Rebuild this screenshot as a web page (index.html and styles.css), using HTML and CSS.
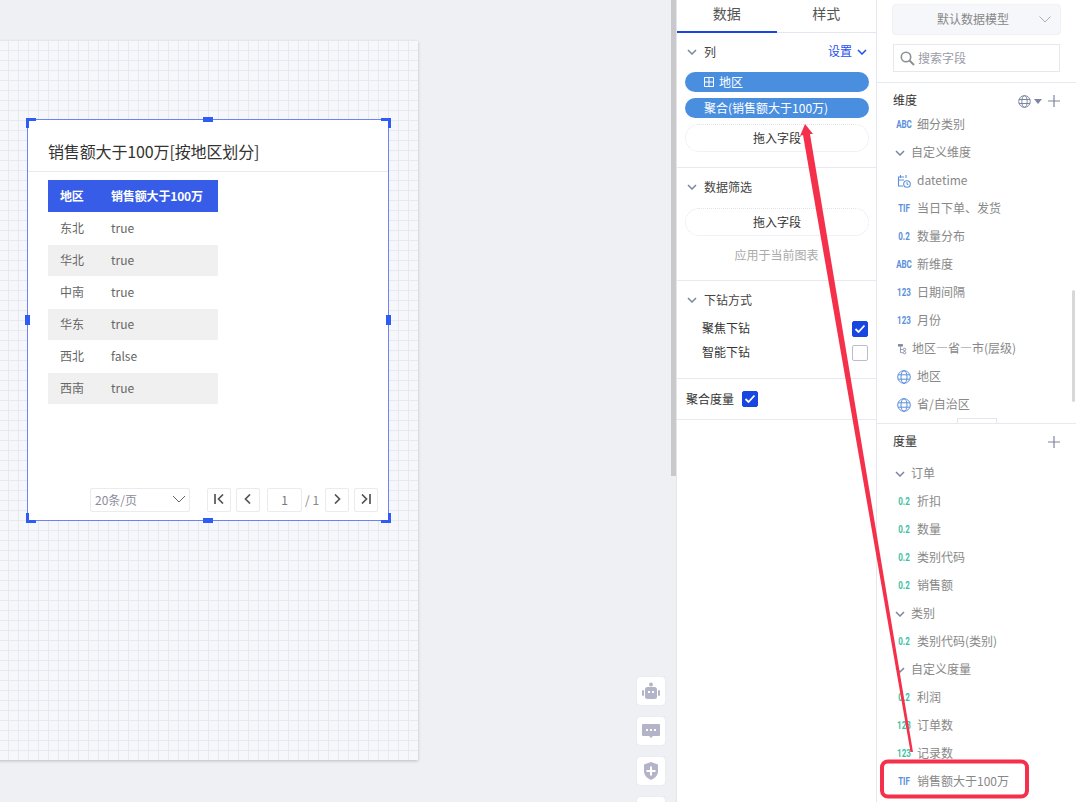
FILE: index.html
```html
<!DOCTYPE html>
<html lang="zh-CN">
<head>
<meta charset="utf-8">
<title>数据面板</title>
<link rel="stylesheet" href="styles.css">
</head>
<body>
<div class="app">
  <main class="canvas">
    <div class="paper">
      <section class="card">
        <span class="h h-tl"></span><span class="h h-tr"></span><span class="h h-bl"></span><span class="h h-br"></span>
        <span class="m m-t"></span><span class="m m-b"></span><span class="m m-l"></span><span class="m m-r"></span>
        <h1 class="card-title">销售额大于100万[按地区划分]</h1>
        <table class="tbl">
          <thead><tr><th class="c1">地区</th><th>销售额大于100万</th></tr></thead>
          <tbody>
            <tr><td>东北</td><td>true</td></tr>
            <tr class="alt"><td>华北</td><td>true</td></tr>
            <tr><td>中南</td><td>true</td></tr>
            <tr class="alt"><td>华东</td><td>true</td></tr>
            <tr><td>西北</td><td>false</td></tr>
            <tr class="alt"><td>西南</td><td>true</td></tr>
          </tbody>
        </table>
        <div class="pager">
          <div class="pg-select"><span>20条/页</span><svg width="14" height="8" viewBox="0 0 14 8"><path d="M1 1l6 6 6-6" fill="none" stroke="#666" stroke-width="1"/></svg></div>
          <button class="pg-btn first"><svg width="12" height="10" viewBox="0 0 12 10"><path d="M2 0v10M10 .5L5.500 5l4.500 4.500" fill="none" stroke="#555" stroke-width="1.700"/></svg></button>
          <button class="pg-btn"><svg width="8" height="10" viewBox="0 0 8 10"><path d="M6 .5L1.500 5 6 9.500" fill="none" stroke="#555" stroke-width="1.700"/></svg></button>
          <div class="pg-input">1</div>
          <span class="pg-total">/ 1</span>
          <button class="pg-btn"><svg width="8" height="10" viewBox="0 0 8 10"><path d="M2 .5L6.500 5 2 9.500" fill="none" stroke="#555" stroke-width="1.700"/></svg></button>
          <button class="pg-btn"><svg width="12" height="10" viewBox="0 0 12 10"><path d="M10 0v10M2 .5L6.500 5 2 9.500" fill="none" stroke="#555" stroke-width="1.700"/></svg></button>
        </div>
      </section>
    </div>
    <div class="tools">
      <div class="tool"><svg width="20" height="18" viewBox="0 0 20 18"><circle cx="10" cy="2.500" r="2" fill="#b4b4c8"/><rect x="4" y="5" width="12" height="12" rx="2.500" fill="#b4b4c8"/><rect x="1" y="8" width="2" height="6" rx="1" fill="#b4b4c8"/><rect x="17" y="8" width="2" height="6" rx="1" fill="#b4b4c8"/><rect x="7" y="9" width="2" height="2" fill="#fff"/><rect x="11" y="9" width="2" height="2" fill="#fff"/></svg></div>
      <div class="tool"><svg width="18" height="15" viewBox="0 0 18 15"><path d="M1 0h16a1 1 0 0 1 1 1v10a1 1 0 0 1-1 1h-6l-2 2-2-2H1a1 1 0 0 1-1-1V1a1 1 0 0 1 1-1z" fill="#b4b4c8"/><rect x="4" y="5" width="2" height="2" fill="#fff"/><rect x="8" y="5" width="2" height="2" fill="#fff"/><rect x="12" y="5" width="2" height="2" fill="#fff"/></svg></div>
      <div class="tool"><svg width="16" height="18" viewBox="0 0 16 18"><path d="M8 0l7 2.500v7c0 4-3.500 7-7 8.500-3.500-1.500-7-4.500-7-8.500v-7z" fill="#b4b4c8"/><path d="M8 4.500v9M3.500 9h9" stroke="#fff" stroke-width="2"/></svg></div>
      <div class="tool"></div>
    </div>
    <div class="canvas-scroll"></div>
  </main>

  <aside class="data-panel">
    <nav class="tabs"><div class="tab active">数据</div><div class="tab">样式</div></nav>
    <section class="sec sec-col">
      <div class="sec-head"><svg class="chev" width="10" height="6" viewBox="0 0 10 6"><path d="M1 1l4 4 4-4" fill="none" stroke="#7d86a0" stroke-width="1.500"/></svg><span class="sec-name">列</span><span class="setting">设置<svg width="10" height="6" viewBox="0 0 10 6"><path d="M1 1l4 4 4-4" fill="none" stroke="#1d4ff0" stroke-width="1.500"/></svg></span></div>
      <div class="pill"><svg width="10" height="10" viewBox="0 0 10 10"><path d="M.5.500h9v9h-9zM5 .5v9M.5 5h9" fill="none" stroke="#fff"/></svg>地区</div>
      <div class="pill">聚合(销售额大于100万)</div>
      <div class="drop">拖入字段</div>
    </section>
    <section class="sec sec-filter">
      <div class="sec-head"><svg class="chev" width="10" height="6" viewBox="0 0 10 6"><path d="M1 1l4 4 4-4" fill="none" stroke="#7d86a0" stroke-width="1.500"/></svg><span class="sec-name">数据筛选</span></div>
      <div class="drop">拖入字段</div>
      <div class="apply">应用于当前图表</div>
    </section>
    <section class="sec sec-drill">
      <div class="sec-head"><svg class="chev" width="10" height="6" viewBox="0 0 10 6"><path d="M1 1l4 4 4-4" fill="none" stroke="#7d86a0" stroke-width="1.500"/></svg><span class="sec-name">下钻方式</span></div>
      <div class="opt"><span class="opt-name">聚焦下钻</span><span class="check on"><svg width="12" height="10" viewBox="0 0 12 10"><path d="M1.500 5l3 3 6-6.500" fill="none" stroke="#fff" stroke-width="1.800"/></svg></span></div>
      <div class="opt"><span class="opt-name">智能下钻</span><span class="check"></span></div>
    </section>
    <section class="sec sec-agg">
      <span class="opt-name">聚合度量</span><span class="check on"><svg width="12" height="10" viewBox="0 0 12 10"><path d="M1.500 5l3 3 6-6.500" fill="none" stroke="#fff" stroke-width="1.800"/></svg></span>
    </section>
  </aside>

  <aside class="field-panel">
    <div class="model"><span class="lift">默认数据模型</span><svg width="12" height="7" viewBox="0 0 12 7"><path d="M.5.500L6 6 11.500.500" fill="none" stroke="#a8adb8" stroke-width="1"/></svg></div>
    <div class="search"><svg width="15" height="15" viewBox="0 0 15 15"><circle cx="6" cy="6" r="4.700" fill="none" stroke="#8c8f96" stroke-width="1.600"/><path d="M9.500 9.500L14 14" stroke="#8c8f96" stroke-width="2"/></svg><span class="lift">搜索字段</span></div>
    <section class="dims">
      <div class="list-head"><span class="lift">维度</span><span class="head-icons"><svg width="13" height="13" viewBox="0 0 13 13"><g fill="none" stroke="#7d86a0"><circle cx="6.500" cy="6.500" r="5.800"/><ellipse cx="6.500" cy="6.500" rx="2.700" ry="5.800"/><path d="M1 4.500h11M1 8.500h11"/></g></svg><svg width="8" height="5" viewBox="0 0 8 5"><path d="M0 0h8L4 5z" fill="#7d86a0"/></svg><svg class="plus" width="12" height="12" viewBox="0 0 12 12"><path d="M6 0v12M0 6h12" stroke="#7d86a0" stroke-width="1.200"/></svg></span></div>
      <div class="row"><b class="bd blue">ABC</b>细分类别</div>
      <div class="row grp"><svg width="10" height="6" viewBox="0 0 10 6"><path d="M1 1l4 4 4-4" fill="none" stroke="#7d86a0" stroke-width="1.500"/></svg>自定义维度</div>
      <div class="row"><span class="bd"><svg width="14" height="14" viewBox="0 0 14 14"><g fill="none" stroke="#5b8fdc" stroke-width="1.100"><path d="M7 3H1.500v9H6M3.500 1v3M9 1v3M1.500 6H7"/><circle cx="10" cy="10" r="3.300"/><path d="M10 8.300V10l1.200.8"/></g></svg></span>datetime</div>
      <div class="row"><b class="bd blue">TIF</b>当日下单、发货</div>
      <div class="row"><b class="bd blue">0.2</b>数量分布</div>
      <div class="row"><b class="bd blue">ABC</b>新维度</div>
      <div class="row"><b class="bd blue">123</b>日期间隔</div>
      <div class="row"><b class="bd blue">123</b>月份</div>
      <div class="row tree"><span class="bd"><svg width="11" height="12" viewBox="0 0 11 12"><path d="M0 0h6v3H0z" fill="#7d86a0"/><path d="M3 3v7.500h3M3 6.500h3" fill="none" stroke="#7d86a0"/><circle cx="8" cy="6.500" r="1.500" fill="none" stroke="#7d86a0"/><circle cx="8" cy="10.500" r="1.500" fill="none" stroke="#7d86a0"/></svg></span>地区—省—市(层级)</div>
      <div class="row"><span class="bd"><svg width="14" height="14" viewBox="0 0 14 14"><g fill="none" stroke="#5b8fdc"><circle cx="7" cy="7" r="6.300"/><ellipse cx="7" cy="7" rx="3" ry="6.300"/><path d="M1 4.800h12M1 9.200h12"/></g></svg></span>地区</div>
      <div class="row"><span class="bd"><svg width="14" height="14" viewBox="0 0 14 14"><g fill="none" stroke="#5b8fdc"><circle cx="7" cy="7" r="6.300"/><ellipse cx="7" cy="7" rx="3" ry="6.300"/><path d="M1 4.800h12M1 9.200h12"/></g></svg></span>省/自治区</div>
      <div class="resize"></div>
      <div class="field-scroll"></div>
    </section>
    <section class="meas">
      <div class="list-head"><span class="lift">度量</span><span class="head-icons"><svg class="plus" width="12" height="12" viewBox="0 0 12 12"><path d="M6 0v12M0 6h12" stroke="#7d86a0" stroke-width="1.200"/></svg></span></div>
      <div class="row grp first-grp"><svg width="10" height="6" viewBox="0 0 10 6"><path d="M1 1l4 4 4-4" fill="none" stroke="#7d86a0" stroke-width="1.500"/></svg>订单</div>
      <div class="row"><b class="bd green">0.2</b>折扣</div>
      <div class="row"><b class="bd green">0.2</b>数量</div>
      <div class="row"><b class="bd green">0.2</b>类别代码</div>
      <div class="row"><b class="bd green">0.2</b>销售额</div>
      <div class="row grp"><svg width="10" height="6" viewBox="0 0 10 6"><path d="M1 1l4 4 4-4" fill="none" stroke="#7d86a0" stroke-width="1.500"/></svg>类别</div>
      <div class="row"><b class="bd green">0.2</b>类别代码(类别)</div>
      <div class="row grp"><svg width="10" height="6" viewBox="0 0 10 6"><path d="M1 1l4 4 4-4" fill="none" stroke="#7d86a0" stroke-width="1.500"/></svg>自定义度量</div>
      <div class="row"><b class="bd green">0.2</b>利润</div>
      <div class="row"><b class="bd green">123</b>订单数</div>
      <div class="row"><b class="bd green">123</b>记录数</div>
      <div class="row"><b class="bd blue">TIF</b>销售额大于100万</div>
    </section>
  </aside>

  <svg class="annot" width="1076" height="802" viewBox="0 0 1076 802">
    <rect x="882" y="761.500" width="145" height="35" rx="6" fill="none" stroke="#f5304a" stroke-width="4"/>
    <path d="M805 124L813 134 810 134 913 752 910.500 752 803 135 800 136z" fill="#f5304a"/>
  </svg>
</div>
</body>
</html>
```

FILE: styles.css
```css
* { box-sizing: border-box; }
html, body { margin: 0; height: 100%; overflow: hidden; }
body { font-family: "Noto Sans CJK SC", "Noto Sans", sans-serif; font-size: 12px; color: #333; background: #fff; }
.app { position: relative; display: flex; width: 1076px; height: 802px; overflow: hidden; }
.lift { padding-bottom: 2px; }

/* canvas */
.canvas { position: relative; width: 677px; flex: none; background: #eef0f4; overflow: hidden; border-right: 1px solid #e4e4ee; }
.paper {
  position: absolute; left: -10px; top: 41px; width: 428px; height: 719px;
  background-color: #f6f7fb;
  background-image: linear-gradient(#e8e9ef 1px, transparent 1px), linear-gradient(90deg, #e8e9ef 1px, transparent 1px);
  background-size: 10px 10px;
  background-position: 8px 9px;
  box-shadow: 0 1px 3px rgba(0,0,0,.22);
}
.card { position: absolute; left: 37px; top: 78px; width: 362px; height: 402px; background: #fff; border: 1px solid #6a84f5; display: flex; flex-direction: column; }
.h, .m { position: absolute; background: #2f5cf5; }
.h { width: 10px; height: 10px; background: linear-gradient(#2f5cf5,#2f5cf5) no-repeat, linear-gradient(#2f5cf5,#2f5cf5) no-repeat; }
.h-tl { left: -2px; top: -2px; background-size: 10px 3px, 3px 10px; background-position: 0 0, 0 0; }
.h-tr { right: -3px; top: -2px; background-size: 10px 3px, 3px 10px; background-position: 0 0, 100% 0; }
.h-bl { left: -2px; bottom: -3px; background-size: 10px 3px, 3px 10px; background-position: 0 100%, 0 0; }
.h-br { right: -3px; bottom: -3px; background-size: 10px 3px, 3px 10px; background-position: 0 100%, 100% 0; }
.m-t { left: 175px; top: -3px; width: 10px; height: 5px; }
.m-b { left: 175px; bottom: -3px; width: 10px; height: 5px; }
.m-l { left: -3px; top: 195px; width: 5px; height: 10px; }
.m-r { right: -3px; top: 195px; width: 5px; height: 10px; }
.card-title { margin: 0; height: 52px; padding: 19px 0 0 20px; font-size: 16px; line-height: 24px; font-weight: 400; color: #333; letter-spacing: -.13px; border-bottom: 1px solid #e9e9ec; white-space: nowrap; }
.tbl { margin: 8px 0 0 20px; width: 170px; border-collapse: collapse; table-layout: fixed; }
.tbl th { height: 32px; padding: 0 0 2px 12px; background: #375ce8; color: #fff; font-weight: 700; letter-spacing: -.15px; text-align: left; white-space: nowrap; }
.tbl th.c1 { width: 51px; }
.tbl td { height: 32px; padding: 0 0 1px 12px; color: #666; border-bottom: 1px solid #fff; }
.tbl tr.alt td { background: #f0f0f0; }
.pager { display: flex; align-items: center; margin-top: auto; padding: 0 10px 8px 0; justify-content: flex-end; height: 32px; }
.pg-select { width: 100px; height: 24px; margin-right: 17px; padding: 0 3px 2px 4px; border: 1px solid #ebebeb; border-radius: 2px; display: flex; align-items: center; justify-content: space-between; color: #8c8c9c; font-size: 12px; }
.pg-btn { width: 24px; height: 24px; padding: 0 0 3px; background: #fff; border: 1px solid #ebebeb; border-radius: 2px; display: flex; align-items: center; justify-content: center; margin-left: 5px; }
.pg-btn.first { margin-left: 0; }
.pg-input { width: 35px; height: 24px; margin-left: 7px; border: 1px solid #ebebeb; border-radius: 2px; text-align: center; line-height: 21px; color: #777; }
.pg-total { width: 23px; padding: 0 0 2px 3px; color: #888; white-space: nowrap; }
.pg-total + .pg-btn { margin-left: 0; }
.tools { position: absolute; left: 637px; top: 677px; display: flex; flex-direction: column; gap: 12px; }
.tool { width: 28px; height: 28px; background: #fff; border-radius: 3px; display: flex; align-items: center; justify-content: center; box-shadow: 0 0 1px rgba(120,130,160,.3); }
.canvas-scroll { position: absolute; right: 0; top: 0; width: 5px; height: 476px; background: #c9c9cc; }

/* data panel */
.data-panel { width: 200px; flex: none; border-right: 1px solid #e6e6f0; background: #fff; }
.tabs { display: flex; height: 33px; border-bottom: 1px solid #e6e6f0; }
.tab { flex: 1; height: 33px; text-align: center; font-size: 14px; line-height: 26px; color: #555; }
.tab.active { border-bottom: 2px solid #1746e0; }
.sec { border-bottom: 1px solid #e8e8f0; padding: 0 8px; }
.sec-head { display: flex; align-items: center; height: 20px; }
.chev { margin-left: 2px; flex: none; }
.sec-name { margin-left: 7px; padding-bottom: 2px; color: #444; }
.setting { margin-left: auto; margin-right: 1px; height: 20px; line-height: 18px; color: #1d4ff0; display: flex; align-items: flex-start; gap: 5px; }
.setting svg { align-self: center; }
.sec-col { height: 135px; padding-top: 9px; }
.pill { height: 20px; margin-top: 6px; width: 184px; padding-left: 19px; border-radius: 10px; background: #4a8ee0; color: #fff; line-height: 19px; display: flex; align-items: flex-start; gap: 5px; white-space: nowrap; }
.pill svg { align-self: center; }
.sec-col .sec-head + .pill { margin-top: 10px; }
.drop { height: 28px; width: 184px; margin-top: 6px; border: 1px dotted #e2e4ea; border-radius: 14px; text-align: center; line-height: 26px; color: #333; }
.sec-filter { height: 113px; padding-top: 9px; }
.sec-filter .drop { margin-top: 11px; line-height: 25px; }
.apply { text-align: center; margin-top: 9px; color: #aaa; line-height: 20px; }
.sec-drill { height: 98px; padding-top: 9px; }
.opt { display: flex; justify-content: space-between; align-items: center; height: 24px; padding: 0 0 0 17px; color: #333; }
.opt-name { padding-bottom: 4px; }
.sec-drill .sec-head { margin-bottom: 7px; }
.check { width: 16px; height: 16px; border-radius: 2px; border: 1px solid #bcbccc; display: inline-flex; align-items: center; justify-content: center; background: #fff; }
.check.on { background: #1746e0; border-color: #1746e0; }
.sec-agg { height: 41px; display: flex; align-items: center; gap: 8px; padding-left: 9px; color: #333; }
.sec-agg .opt-name { padding-bottom: 2px; }

/* field panel */
.field-panel { width: 199px; flex: none; background: #fff; }
.model { margin: 5px 16px 0; width: 167px; height: 29px; background: #f6f7fa; border-radius: 3px; box-shadow: 0 0 2px rgba(0,0,0,.2); display: flex; align-items: center; justify-content: space-between; padding: 0 9px 0 44px; color: #888; }
.search { margin: 10px 16px 0; width: 167px; height: 28px; border: 1px solid #e6e8f0; display: flex; align-items: center; gap: 3px; padding-left: 6px; color: #9a9aa8; }
.dims { position: relative; margin-top: 10px; height: 342px; border-top: 1px solid #e8e8f0; border-bottom: 1px solid #e8e8f0; padding: 4px 0 0; overflow: hidden; }
.list-head { display: flex; align-items: center; justify-content: space-between; height: 28px; padding: 0 16px; color: #333; line-height: 28px; }
.head-icons { display: flex; align-items: center; gap: 3px; }
.plus { margin-left: 3px; }
.row { display: flex; align-items: flex-start; height: 28px; color: #888; white-space: nowrap; line-height: 26px; }
.row > svg, .row > .bd { align-self: center; }
.dims .list-head + .row { margin-top: -4px; }
.bd { width: 40px; flex: none; padding-left: 20px; padding-right: 5px; display: flex; align-items: center; }
b.bd { padding-left: 19px; justify-content: center; font-size: 10px; font-weight: 700; font-family: "Roboto", "Liberation Sans", sans-serif; transform: scaleX(.8); transform-origin: 27px 50%; }
.bd.blue { color: #5b8fdc; }
.bd.green { color: #3dbfa5; }
.tree .bd { width: 35px; padding-left: 21px; }
.grp { padding-left: 18px; gap: 6px; color: #888; }
.resize { position: absolute; left: 80px; bottom: -1px; width: 40px; height: 6px; border: 1px solid #e6e6ea; border-bottom: 0; background: #fff; }
.field-scroll { position: absolute; right: 1px; top: 207px; width: 3px; height: 112px; background: #d8d8d8; border-radius: 2px; }
.meas { padding-top: 4px; }
.first-grp { margin-top: 4px; }

/* annotation */
.annot { position: absolute; left: 0; top: 0; pointer-events: none; }
```
